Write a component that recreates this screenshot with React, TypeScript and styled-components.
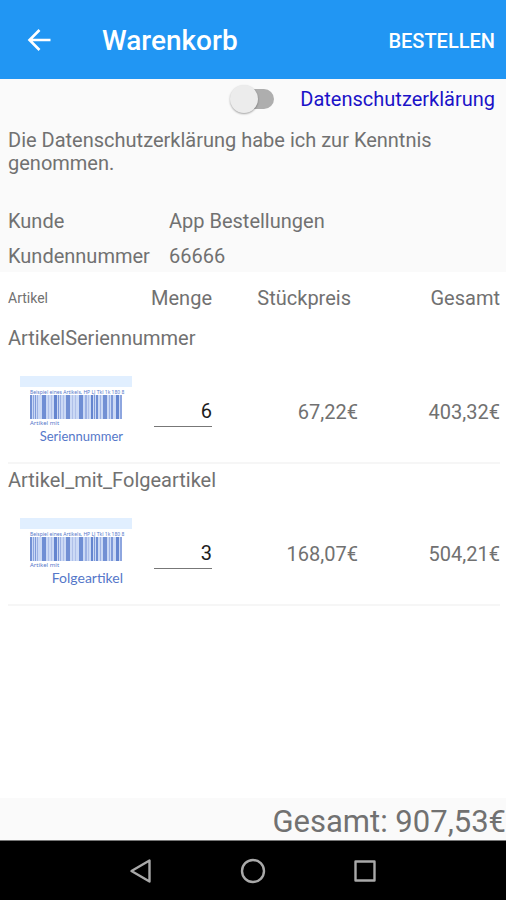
import React, { useState } from "react";
import styled, { createGlobalStyle } from "styled-components";

const GlobalStyle = createGlobalStyle`
  * { box-sizing: border-box; }
  body {
    margin: 0;
    background: #ffffff;
    color: #717171;
    font-family: Roboto, "Noto Sans", sans-serif;
    font-size: 20px;
    line-height: 23px;
  }
  button, input { font: inherit; color: inherit; }
`;

const Screen = styled.div`
  display: flex;
  flex-direction: column;
  min-height: 100vh;
`;

const AppBar = styled.header`
  display: flex;
  align-items: center;
  height: 79px;
  padding: 3px 11px 0 24px;
  background: #2196f3;
  color: #ffffff;
`;

const BarButton = styled.button`
  display: flex;
  padding: 0;
  border: 0;
  background: none;
  font-weight: 500;
  cursor: pointer;
`;

const Title = styled.h1`
  flex: 1;
  margin: 0 0 0 48px;
  font-size: 28px;
  line-height: 32px;
  font-weight: 500;
`;

const Details = styled.section`
  height: 193px;
  padding: 4px 8px 0;
  background: #fafafa;
`;

const ConsentRow = styled.div`
  display: flex;
  justify-content: flex-end;
  align-items: center;
  gap: 26px;
  height: 32px;
  padding-right: 3px;
`;

const Switch = styled.input`
  appearance: none;
  position: relative;
  width: 44px;
  height: 20px;
  margin: 0;
  border-radius: 10px;
  background: linear-gradient(#aeaeae, #aeaeae) right / 40px 20px no-repeat;
  cursor: pointer;

  &::before {
    content: "";
    position: absolute;
    top: -4px;
    left: 0;
    width: 28px;
    height: 28px;
    border-radius: 50%;
    background: #ececec;
    box-shadow: 0 1px 2px rgba(0, 0, 0, 0.35);
  }

  &:checked::before {
    left: 16px;
    background: #2196f3;
  }
`;

const PrivacyLink = styled.a`
  color: #1b12c8;
  text-decoration: none;
`;

const ConsentLabel = styled.label`
  display: block;
  margin-top: 14px;
  padding-right: 50px;
`;

const Customer = styled.dl`
  display: grid;
  grid-template-columns: 161px 1fr;
  row-gap: 12px;
  margin: 35px 0 0;
`;

const Term = styled.dt``;

const Value = styled.dd`
  margin: 0;
`;

const Cart = styled.main`
  flex: 1;
  padding: 0 6px 0 8px;
  background: #ffffff;
`;

const CartTable = styled.table`
  width: 100%;
  table-layout: fixed;
  border-collapse: separate;
  border-spacing: 0;
`;

const HeadCell = styled.th<{ $width?: string; $small?: boolean; $inset?: number }>`
  width: ${(p) => p.$width ?? "auto"};
  height: 50px;
  padding: 2px ${(p) => p.$inset ?? 0}px 0 0;
  font-weight: 400;
  font-size: ${(p) => (p.$small ? 14 : 20)}px;
  text-align: ${(p) => (p.$small ? "left" : "right")};
`;

const NameCell = styled.td`
  height: 30px;
  padding: 2px 0 0;
`;

const ItemCell = styled.td<{ $left?: boolean }>`
  height: 112px;
  padding: ${(p) => (p.$left ? "6px 0 0 12px" : "10px 0 0")};
  border-bottom: 2px solid #f6f6f6;
  text-align: ${(p) => (p.$left ? "left" : "right")};
`;

const Quantity = styled.input`
  display: block;
  width: 58px;
  height: 30px;
  margin-left: auto;
  padding: 0 0 2px;
  border: 0;
  border-bottom: 1px solid #777777;
  border-radius: 0;
  background: none;
  color: #1c1c1c;
  text-align: right;
  outline: none;
`;

const Label = styled.figure`
  width: 112px;
  margin: 0;
  color: #5577c9;
  font-family: "Noto Sans", sans-serif;
`;

const LabelStrip = styled.div`
  height: 11px;
  background: #e1efff;
`;

const LabelBody = styled.div`
  padding: 2px 9px 0 10px;
`;

const LabelNote = styled.div`
  height: 6px;
  white-space: nowrap;
  font-size: 5px;
  line-height: 6px;
`;

const LabelKind = styled.div`
  font-size: 6px;
  line-height: 9px;
`;

const LabelName = styled.figcaption<{ $size: number }>`
  font-family: Lato, "Noto Sans", sans-serif;
  font-size: ${(p) => p.$size}px;
  line-height: 16px;
  text-align: right;
`;

const BarcodeSvg = styled.svg`
  display: block;
  width: 100%;
  height: 24px;
`;

const Total = styled.footer`
  display: flex;
  justify-content: flex-end;
  height: 43px;
  padding-top: 5px;
  border-bottom: 1px solid #777777;
  background: #fafafa;
  font-size: 31px;
  line-height: 37px;
  white-space: nowrap;
`;

const SystemBar = styled.nav`
  display: flex;
  justify-content: center;
  align-items: center;
  gap: 84px;
  height: 59px;
  background: #000000;
`;

const SystemButton = styled.button`
  display: flex;
  padding: 0;
  border: 0;
  background: none;
`;

const items = [
  { name: "ArtikelSeriennummer", label: "Seriennummer", labelSize: 13, quantity: 6, price: "67,22€", total: "403,32€" },
  { name: "Artikel_mit_Folgeartikel", label: "Folgeartikel", labelSize: 14, quantity: 3, price: "168,07€", total: "504,21€" },
];

// Start, width and colour of each bar.
const bars: [number, number, string][] = [
  [0, 2, "#7290d4"], [3, 1, "#8ea6df"], [5, 1, "#7f9ad9"], [7, 1, "#9db2e4"],
  [12, 4, "#6f8ed4"], [18, 1, "#afc0e9"], [21, 1, "#afc0e9"],
  [24, 3, "#6485cf"], [28, 1, "#7f9ad9"], [30, 1, "#9db2e4"], [33, 1, "#afc0e9"],
  [36, 4, "#7290d4"], [42, 1, "#afc0e9"], [45, 1, "#afc0e9"],
  [49, 4, "#6f8ed4"], [55, 2, "#9db2e4"], [58, 1, "#afc0e9"],
  [61, 2, "#6485cf"], [64, 1, "#7f9ad9"], [66, 2, "#6f8ed4"], [70, 1, "#9db2e4"],
  [73, 4, "#7290d4"], [79, 1, "#9db2e4"], [81, 2, "#7f9ad9"],
  [86, 3, "#6485cf"], [90, 2, "#8ea6df"],
];

function Barcode() {
  return (
    <BarcodeSvg viewBox="0 0 93 24" preserveAspectRatio="none" aria-hidden="true">
      <rect width="92" height="24" fill="#cbd9f5" />
      {bars.map(([x, width, fill]) => (
        <rect key={x} x={x} width={width} height="24" fill={fill} />
      ))}
    </BarcodeSvg>
  );
}

function ArticleLabel({ name, size }: { name: string; size: number }) {
  return (
    <Label>
      <LabelStrip />
      <LabelBody>
        <LabelNote>Beispiel eines Artikels, HP LJ Tkl 1k 180 8</LabelNote>
        <Barcode />
        <LabelKind>Artikel mit</LabelKind>
        <LabelName $size={size}>{name}</LabelName>
      </LabelBody>
    </Label>
  );
}

export default function App() {
  const [accepted, setAccepted] = useState(false);

  return (
    <>
      <GlobalStyle />
      <Screen>
        <AppBar>
          <BarButton type="button" aria-label="Zurück">
            <svg width="30" height="30" viewBox="0 0 30 30" fill="none" stroke="#ffffff" strokeWidth="2.6">
              <path d="M26.5 14H6M15.5 4L5.5 14l10 10" />
            </svg>
          </BarButton>
          <Title>Warenkorb</Title>
          <BarButton type="button">BESTELLEN</BarButton>
        </AppBar>

        <Details>
          <ConsentRow>
            <Switch
              id="consent"
              type="checkbox"
              role="switch"
              checked={accepted}
              onChange={(e) => setAccepted(e.target.checked)}
            />
            <PrivacyLink href="#datenschutz">Datenschutzerklärung</PrivacyLink>
          </ConsentRow>
          <ConsentLabel htmlFor="consent">
            Die Datenschutzerklärung habe ich zur Kenntnis genommen.
          </ConsentLabel>
          <Customer>
            <Term>Kunde</Term>
            <Value>App Bestellungen</Value>
            <Term>Kundennummer</Term>
            <Value>66666</Value>
          </Customer>
        </Details>

        <Cart>
          <CartTable>
            <thead>
              <tr>
                <HeadCell scope="col" $width="136px" $small>Artikel</HeadCell>
                <HeadCell scope="col" $width="68px">Menge</HeadCell>
                <HeadCell scope="col" $inset={7}>Stückpreis</HeadCell>
                <HeadCell scope="col" $width="142px">Gesamt</HeadCell>
              </tr>
            </thead>
            {items.map((item) => (
              <tbody key={item.name}>
                <tr>
                  <NameCell colSpan={4}>{item.name}</NameCell>
                </tr>
                <tr>
                  <ItemCell $left>
                    <ArticleLabel name={item.label} size={item.labelSize} />
                  </ItemCell>
                  <ItemCell>
                    <Quantity
                      type="text"
                      inputMode="numeric"
                      aria-label={`Menge ${item.name}`}
                      defaultValue={item.quantity}
                    />
                  </ItemCell>
                  <ItemCell>{item.price}</ItemCell>
                  <ItemCell>{item.total}</ItemCell>
                </tr>
              </tbody>
            ))}
          </CartTable>
        </Cart>

        <Total>Gesamt: 907,53€</Total>

        <SystemBar>
          <SystemButton type="button" aria-label="Zurück">
            <svg width="28" height="28" viewBox="0 0 28 28" fill="none" stroke="#a9a9a9" strokeWidth="2.4" strokeLinejoin="round">
              <path d="M22.5 3.5v21L4.5 14z" />
            </svg>
          </SystemButton>
          <SystemButton type="button" aria-label="Startbildschirm">
            <svg width="28" height="28" viewBox="0 0 28 28" fill="none" stroke="#a9a9a9" strokeWidth="2.4">
              <circle cx="14" cy="14" r="11" />
            </svg>
          </SystemButton>
          <SystemButton type="button" aria-label="Übersicht">
            <svg width="28" height="28" viewBox="0 0 28 28" fill="none" stroke="#a9a9a9" strokeWidth="2.4" strokeLinejoin="round">
              <path d="M4.5 4.5h19v19h-19z" />
            </svg>
          </SystemButton>
        </SystemBar>
      </Screen>
    </>
  );
}
